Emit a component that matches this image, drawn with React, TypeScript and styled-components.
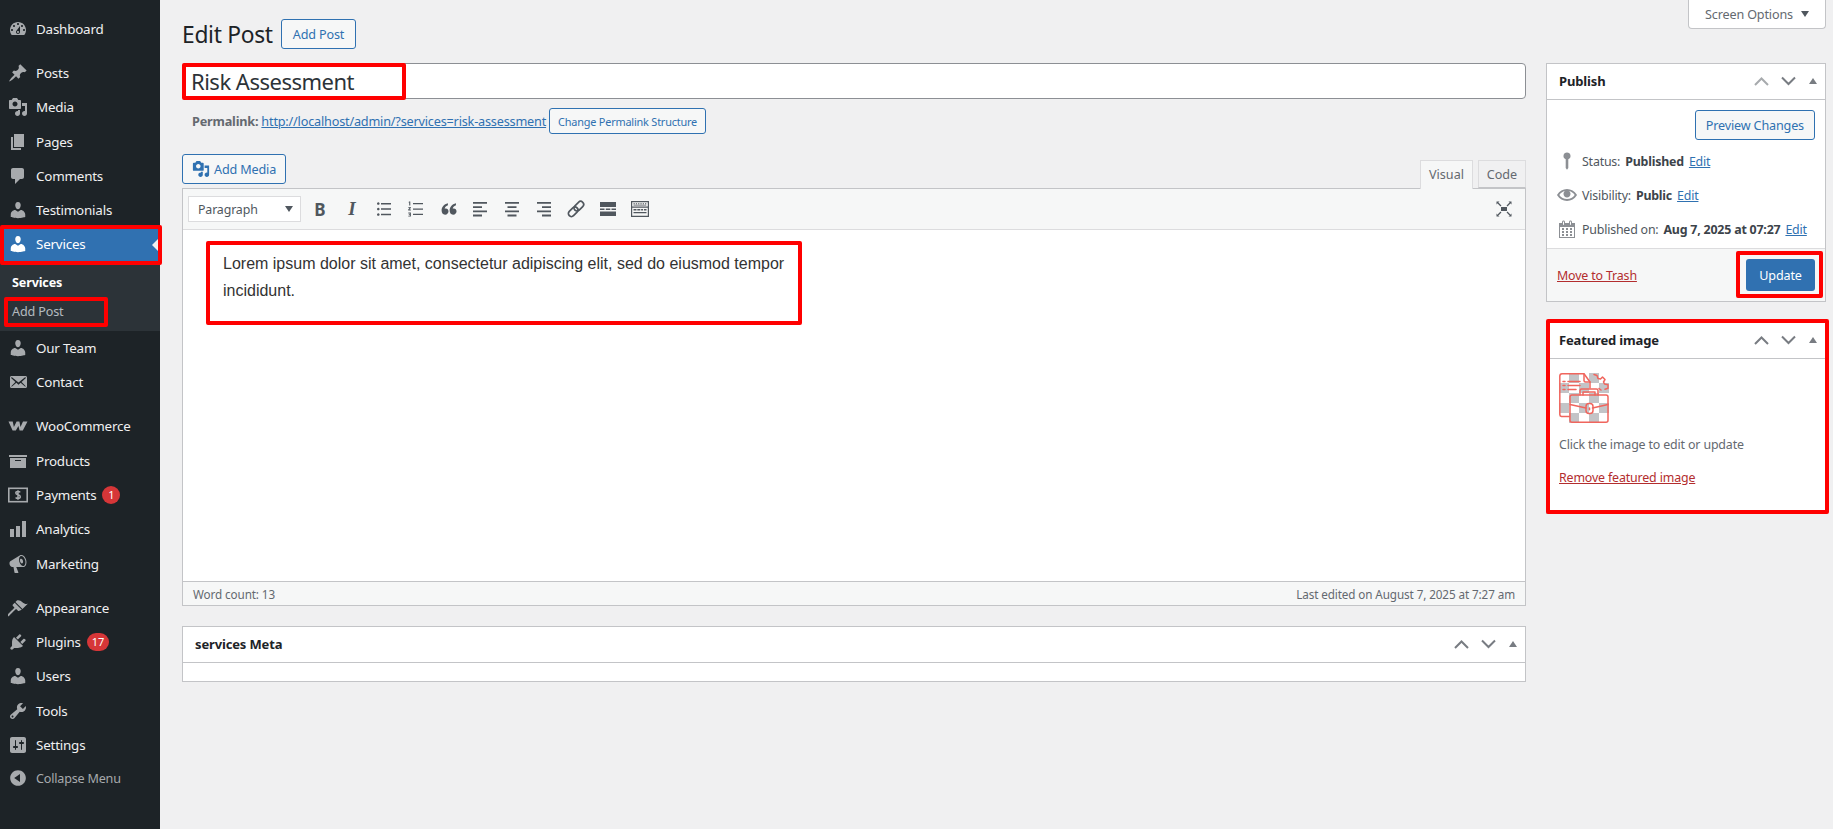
import React from 'react';
import styled, { createGlobalStyle } from 'styled-components';

const UI = `"Noto Sans", "Open Sans", "DejaVu Sans", sans-serif`;

const Global = createGlobalStyle`
  html, body { margin: 0; padding: 0; background: #f0f0f1; }
  body { font-family: ${UI}; font-size: 13px; color: #3c434a; }
  * { box-sizing: border-box; }
`;

const Page = styled.div`
  position: relative;
  display: flex;
  width: 1833px;
  height: 829px;
  overflow: hidden;
`;
const Sidebar = styled.nav`
  width: 160px;
  flex: none;
  background: #1d2327;
  padding-top: 12px;
`;
const MenuItem = styled.div<{ $current?: boolean }>`
  position: relative;
  height: 34.3px;
  display: flex;
  align-items: center;
  gap: 8px;
  padding: 0 0 1px 8px;
  font-size: 13.4px;
  letter-spacing: -0.2px;
  color: ${p => (p.$current ? '#fff' : '#f0f0f1')};
  background: ${p => (p.$current ? '#3071b1' : 'transparent')};
  svg { fill: ${p => (p.$current ? '#fff' : '#a7aaad')}; }
`;
const Notch = styled.span`
  position: absolute;
  right: 0;
  top: 50%;
  margin-top: -8px;
  border: 8px solid transparent;
  border-right-color: #f0f0f1;
  border-left-width: 0;
`;
const Separator = styled.div`
  height: 10px;
`;
const Submenu = styled.div`
  background: #2c3338;
  height: 69px;
  padding-top: 6px;
`;
const SubItem = styled.div<{ $strong?: boolean }>`
  height: 29px;
  line-height: 29px;
  padding-left: 12px;
  font-size: 12.6px;
  letter-spacing: -0.15px;
  font-weight: ${p => (p.$strong ? 700 : 400)};
  color: ${p => (p.$strong ? '#fff' : 'rgba(240,246,252,.7)')};
`;
const Badge = styled.span`
  min-width: 18px;
  height: 18px;
  padding: 0 5px;
  margin-left: -2px;
  border-radius: 9px;
  background: #d63638;
  color: #fff;
  font-size: 11px;
  letter-spacing: 0;
  line-height: 18px;
  text-align: center;
`;
const CollapseRow = styled(MenuItem)`
  font-size: 12.6px;
  color: #a7aaad;
  height: 32px;
`;
const Main = styled.main`
  flex: 1;
  padding: 0 7px 0 22px;
`;
const TopRow = styled.header`
  height: 63px;
  display: flex;
  justify-content: space-between;
  align-items: flex-start;
`;
const HeadGroup = styled.div`
  display: flex;
  align-items: center;
  gap: 8px;
  padding-top: 19px;
`;
const Heading = styled.h1`
  margin: 0;
  font-size: 22.8px;
  font-weight: 400;
  line-height: 29px;
  letter-spacing: -0.3px;
  color: #1d2327;
`;
const Button = styled.span<{ $h?: number; $small?: boolean; $pad?: number }>`
  display: inline-flex;
  align-items: center;
  justify-content: center;
  gap: 4px;
  height: ${p => p.$h ?? 30}px;
  padding: 0 ${p => p.$pad ?? 10}px;
  border: 1px solid #2f71b1;
  border-radius: 3px;
  background: #f6f7f7;
  color: #2f71b1;
  font-size: ${p => (p.$small ? 10.9 : 12.6)}px;
  letter-spacing: ${p => (p.$small ? -0.2 : -0.15)}px;
  white-space: nowrap;
  svg { fill: #2f71b1; }
`;
const ScreenOptions = styled.div`
  width: 138px;
  height: 29px;
  display: flex;
  align-items: center;
  justify-content: center;
  gap: 8px;
  background: #fff;
  border: 1px solid #c3c4c7;
  border-top: none;
  border-radius: 0 0 4px 4px;
  font-size: 12.6px;
  letter-spacing: -0.15px;
  color: #646970;
`;
const DownCaret = styled.span`
  border: 4.5px solid transparent;
  border-top: 6px solid #50575e;
  border-bottom: 0;
`;
const Columns = styled.div`
  display: grid;
  grid-template-columns: 1344px 280px;
  gap: 20px;
  align-items: start;
`;
const TitleBox = styled.div`
  height: 36px;
  background: #fff;
  border: 1px solid #8c8f94;
  border-radius: 4px;
  padding-left: 8px;
  font-size: 22px;
  line-height: 35px;
  letter-spacing: -0.5px;
  color: #2c3338;
`;
const PermalinkRow = styled.div`
  height: 26px;
  margin-top: 9px;
  padding-left: 10px;
  display: flex;
  align-items: center;
  gap: 3px;
  font-size: 12.7px;
  letter-spacing: -0.2px;
  color: #646970;
  b { font-weight: 700; }
`;
const Link = styled.a`
  color: #2f71b1;
  text-decoration: underline;
`;
const DangerLink = styled.a`
  color: #b32d2e;
  text-decoration: underline;
`;
const EditorBar = styled.div`
  height: 34px;
  margin-top: 20px;
  display: flex;
  justify-content: space-between;
  align-items: flex-start;
`;
const Tabs = styled.div`
  display: flex;
  gap: 5px;
  padding-top: 6px;
  height: 34px;
`;
const Tab = styled.div<{ $active?: boolean; $w: number }>`
  width: ${p => p.$w}px;
  height: ${p => (p.$active ? 29 : 28)}px;
  border: 1px solid #dcdcde;
  border-bottom: ${p => (p.$active ? 'none' : '1px solid #c3c4c7')};
  background: ${p => (p.$active ? '#f6f7f7' : '#f0f0f1')};
  position: relative;
  z-index: 1;
  font-size: 12.6px;
  line-height: 27px;
  text-align: center;
  color: #646970;
`;
const Editor = styled.section`
  border: 1px solid #c3c4c7;
  background: #fff;
`;
const Toolbar = styled.div`
  height: 41px;
  background: #f6f7f7;
  border-bottom: 1px solid #dcdcde;
  display: flex;
  align-items: center;
  padding: 0 5px;
`;
const FormatSelect = styled.div`
  width: 113px;
  height: 26px;
  margin-right: 3px;
  background: #fff;
  border: 1px solid #dcdcde;
  display: flex;
  align-items: center;
  justify-content: space-between;
  padding: 0 7px 0 9px;
  font-size: 12.4px;
  letter-spacing: -0.15px;
  color: #50575e;
`;
const ToolButton = styled.span<{ $italic?: boolean }>`
  width: 32px;
  height: 26px;
  display: flex;
  align-items: center;
  justify-content: center;
  color: #50575e;
  font-family: ${p => (p.$italic ? '"Liberation Serif", serif' : UI)};
  font-size: ${p => (p.$italic ? 19 : 17)}px;
  font-weight: 700;
  font-style: ${p => (p.$italic ? 'italic' : 'normal')};
  svg { fill: #50575e; }
`;
const Spacer = styled.div`
  flex: 1;
`;
const Content = styled.div`
  height: 351px;
  padding: 20px 0 0 40px;
  font-family: "Liberation Sans", Arial, sans-serif;
  font-size: 16px;
  line-height: 27px;
  color: #333;
  width: 620px;
`;
const StatusBar = styled.div`
  height: 24px;
  border-top: 1px solid #c3c4c7;
  background: #f6f7f7;
  display: flex;
  align-items: center;
  justify-content: space-between;
  padding: 0 10px;
  font-size: 11.7px;
  letter-spacing: -0.1px;
  color: #646970;
`;
const Box = styled.section<{ $mt?: number }>`
  background: #fff;
  border: 1px solid #c3c4c7;
  margin-top: ${p => p.$mt ?? 0}px;
`;
const BoxHead = styled.div`
  height: 36px;
  display: flex;
  align-items: center;
  justify-content: space-between;
  padding: 0 6px 2px 12px;
  border-bottom: 1px solid #c3c4c7;
  font-size: 13px;
  font-weight: 700;
  letter-spacing: -0.15px;
  color: #1d2327;
`;
const Handles = styled.div`
  display: flex;
  align-items: center;
  gap: 8px;
`;
const Triangle = styled.span`
  margin-left: 3px;
  margin-right: 2px;
  border: 4.5px solid transparent;
  border-bottom: 6px solid #787c82;
  border-top: 0;
`;
const Chevron = styled.svg<{ $dim?: boolean }>`
  width: 19px;
  height: 12px;
  fill: none;
  stroke: ${p => (p.$dim ? '#a7aaad' : '#787c82')};
  stroke-width: 2;
`;
const PublishBody = styled.div`
  padding: 10px 10px 0;
  height: 148px;
`;
const PreviewRow = styled.div`
  display: flex;
  justify-content: flex-end;
  margin-bottom: 4px;
`;
const StatusLine = styled.div`
  height: 34px;
  display: flex;
  align-items: center;
  gap: 5px;
  font-size: 12.4px;
  letter-spacing: -0.2px;
  color: #50575e;
  white-space: nowrap;
  b { color: #3c434a; font-weight: 700; }
  svg { fill: #8c8f94; flex: none; }
`;
const Actions = styled.div`
  height: 53px;
  background: #f6f7f7;
  border-top: 1px solid #dcdcde;
  display: flex;
  align-items: center;
  justify-content: space-between;
  padding: 0 10px;
  font-size: 12.4px;
  letter-spacing: -0.15px;
`;
const Primary = styled.span`
  width: 69px;
  height: 32px;
  display: flex;
  align-items: center;
  justify-content: center;
  background: #3071b1;
  border-radius: 3px;
  color: #fff;
  font-size: 12.6px;
  letter-spacing: -0.15px;
`;
const FeaturedBody = styled.div`
  padding: 14px 12px 0;
  height: 154px;
  font-size: 12.4px;
  letter-spacing: -0.15px;
  color: #646970;
`;
const FeaturedPic = styled.svg`
  display: block;
  width: 50px;
  height: 50px;
`;
const Hint = styled.p`
  margin: 13px 0 0;
  line-height: 17px;
`;
const RemoveRow = styled.p`
  margin: 16px 0 0;
  line-height: 17px;
`;
const MetaBody = styled.div`
  height: 18px;
`;
const Mark = styled.div<{ $x: number; $y: number; $w: number; $h: number }>`
  position: absolute;
  left: ${p => p.$x}px;
  top: ${p => p.$y}px;
  width: ${p => p.$w}px;
  height: ${p => p.$h}px;
  border: 4px solid #ff0000;
  border-radius: 2px;
  pointer-events: none;
`;

const D = ({ d, s = 20, odd }: { d: string; s?: number; odd?: boolean }) => (
  <svg width={s} height={s} viewBox="0 0 20 20" style={{ flex: 'none' }}>
    <path d={d} fillRule={odd ? 'evenodd' : 'nonzero'} />
  </svg>
);

const I = {
  dashboard: 'M3.76 16h12.48c1.1-1.37 1.76-3.11 1.76-5 0-4.42-3.58-8-8-8s-8 3.58-8 8c0 1.89.66 3.63 1.76 5zM10 4c.55 0 1 .45 1 1s-.45 1-1 1-1-.45-1-1 .45-1 1-1zM6 6c.55 0 1 .45 1 1s-.45 1-1 1-1-.45-1-1 .45-1 1-1zm8 0c.55 0 1 .45 1 1s-.45 1-1 1-1-.45-1-1 .45-1 1-1zm-5.37 5.55L12 7v6c0 1.1-.9 2-2 2s-2-.9-2-2c0-.57.24-1.08.63-1.45zM4 10c.55 0 1 .45 1 1s-.45 1-1 1-1-.45-1-1 .45-1 1-1zm12 0c.55 0 1 .45 1 1s-.45 1-1 1-1-.45-1-1 .45-1 1-1zm-5 3c0-.55-.45-1-1-1s-1 .45-1 1 .45 1 1 1 1-.45 1-1z',
  post: 'M10.44 3.02l1.82-1.82 6.36 6.35-1.83 1.82c-1.05-.68-2.48-.57-3.41.36l-.75.75c-.92.93-1.04 2.35-.35 3.41l-1.83 1.82-2.41-2.41-2.8 2.79c-.42.42-3.38 2.71-3.8 2.29s1.86-3.39 2.28-3.81l2.79-2.79L4.1 9.36l1.83-1.82c1.05.69 2.48.57 3.4-.36l.75-.75c.93-.92 1.05-2.35.36-3.41z',
  media: 'M13 11V4c0-.55-.45-1-1-1h-1.67L9 1H5L3.67 3H2c-.55 0-1 .45-1 1v7c0 .55.45 1 1 1h10c.55 0 1-.45 1-1zM7 4.5c1.38 0 2.5 1.12 2.5 2.5S8.38 9.5 7 9.5 4.5 8.38 4.5 7 5.62 4.5 7 4.5zM14 6h5v10.5c0 1.38-1.12 2.5-2.5 2.5S14 17.88 14 16.5s1.12-2.5 2.5-2.5c.17 0 .34.02.5.05V9h-3V6zm-4 8.05V13h2v3.5c0 1.38-1.12 2.5-2.5 2.5S7 17.88 7 16.5 8.12 14 9.5 14c.17 0 .34.02.5.05z',
  page: 'M6 15V2h10v13H6zm-1 1h8v2H3V5h2v11z',
  comment: 'M5 2h9c1.1 0 2 .9 2 2v7c0 1.1-.9 2-2 2h-2l-5 5v-5H5c-1.1 0-2-.9-2-2V4c0-1.1.9-2 2-2z',
  user: 'M10 9.25c-2.27 0-2.73-3.44-2.73-3.44C7 4.02 7.82 2 9.97 2c2.16 0 2.98 2.02 2.71 3.81 0 0-.41 3.44-2.68 3.44zm0 2.57L12.72 10c2.39 0 4.52 2.33 4.52 4.53v2.49s-3.65 1.13-7.24 1.13c-3.65 0-7.24-1.13-7.24-1.13v-2.49c0-2.25 1.94-4.48 4.47-4.48z',
  mail: 'M19 14.5v-9c0-.83-.67-1.5-1.5-1.5H3.49c-.83 0-1.5.67-1.5 1.5v9c0 .83.67 1.5 1.5 1.5H17.5c.83 0 1.5-.67 1.5-1.5zm-1.31-9.11c.33.33.15.67-.03.84L13.6 9.95l3.9 4.06c.12.14.2.36.06.51-.13.16-.43.15-.56.05l-4.37-3.73-2.14 1.95-2.13-1.95-4.37 3.73c-.13.1-.43.11-.56-.05-.14-.15-.06-.37.06-.51l3.9-4.06-4.06-3.72c-.18-.17-.36-.51-.03-.84s.67-.17.95.07l6.24 5.04 6.25-5.04c.28-.24.62-.4.95-.07z',
  woo: 'M.5 5.5h4.2l1.2 5.5 2.7-5.5h2.8l1.1 5.5 2.5-5.5h4.5L14.8 14.5h-3.2l-1.2-4.5-2.6 4.5H4.6z',
  archive: 'M19 4v2H1V4h18zM2 7h16v10H2V7zm11 3V9H7v1h6z',
  bars: 'M18 18V2h-4v16h4zm-6 0V7H8v11h4zm-6 0v-8H2v8h4z',
  megaphone: 'M18.15 5.94c.46 1.62.38 3.22-.02 4.48-.42 1.28-1.26 2.18-2.3 2.48-.16.06-.26.06-.4.06-.06.02-.12.02-.18.02-.06.02-.14.02-.22.02h-6.8l2.22 5.5c.02.14-.06.26-.14.34-.08.1-.24.16-.34.16H6.95c-.1 0-.26-.06-.34-.16-.08-.08-.16-.2-.14-.34l-1-5.5H4.25l-.02-.02c-.5.06-1.08-.18-1.54-.62s-.88-1.08-1.06-1.88c-.24-.8-.2-1.56-.02-2.2.18-.62.58-1.08 1.06-1.3l.02-.02 9-5.4c.1-.06.18-.1.24-.16.06-.04.14-.08.24-.12.16-.08.28-.12.5-.18 1.04-.3 2.24.1 3.22 1 .98.88 1.8 2.24 2.26 3.86zm-2.58 5.98h-.02c.4-.1.74-.34 1.04-.7.58-.7.86-1.76.86-3.04 0-.64-.1-1.3-.28-1.98-.34-1.36-1.02-2.5-1.78-3.24s-1.68-1.1-2.46-.88c-.82.22-1.4.96-1.7 2-.32 1.04-.28 2.36.06 3.72.38 1.36 1 2.5 1.8 3.24.78.74 1.62 1.1 2.48.88zm-2.54-7.08c.22-.04.42-.02.62.04.38.16.76.48 1.02 1s.42 1.2.42 1.78c0 .3-.04.56-.12.8-.18.48-.44.84-.86.94-.34.1-.8-.06-1.14-.4-.34-.32-.64-.86-.84-1.46-.38-1.24-.22-2.36.38-2.7h.02z',
  brush: 'M14.48 11.06L7.41 3.99l1.5-1.5c.5-.56 2.3-.47 3.51.32 1.21.8 1.43 1.28 2.91 2.1 1.18.64 2.45 1.26 4.45.85zm-.71.71L6.7 4.7 4.93 6.47c-.39.39-.39 1.02 0 1.41l1.06 1.06c.39.39.39 1.03 0 1.42-.6.6-6.4 6.2-6.4 6.2-.4.4-.4 1.03 0 1.42.39.39 1.02.39 1.41 0 0 0 5.8-5.8 6.4-6.4.39-.39 1.03-.39 1.42 0l1.06 1.06c.39.39 1.02.39 1.41 0z',
  plug: 'M13.11 4.36L9.87 7.6 8 5.73l3.24-3.24c.35-.34 1.05-.2 1.56.32.52.51.66 1.21.31 1.55zm-8 1.77l.91-1.12 9.01 9.01-1.19.84c-.71.71-2.63 1.16-3.82 1.16H6.14L4.9 17.26c-.59.59-1.54.59-2.12 0-.59-.58-.59-1.53 0-2.12l1.24-1.24v-3.88c0-1.13.4-3.19 1.09-3.89zm7.26 3.97l3.24-3.24c.34-.35 1.04-.21 1.55.31.52.51.66 1.21.31 1.55l-3.24 3.25z',
  wrench: 'M16.68 9.77c-1.34 1.34-3.3 1.67-4.95.99l-5.41 6.52c-.99.99-2.59.99-3.58 0s-.99-2.59 0-3.57l6.52-5.42c-.68-1.65-.35-3.61.99-4.95 1.28-1.28 3.12-1.62 4.72-1.06l-2.89 2.89 2.82 2.82 2.86-2.87c.53 1.58.18 3.39-1.08 4.65zM3.81 16.21c.4.39 1.04.39 1.43 0 .4-.4.4-1.04 0-1.43-.39-.4-1.03-.4-1.43 0-.39.39-.39 1.03 0 1.43z',
  settings: 'M18 16V4c0-1.1-.9-2-2-2H4c-1.1 0-2 .9-2 2v12c0 1.1.9 2 2 2h12c1.1 0 2-.9 2-2zM8 11h1c.55 0 1 .45 1 1s-.45 1-1 1H8v1.5c0 .28-.22.5-.5.5s-.5-.22-.5-.5V13H6c-.55 0-1-.45-1-1s.45-1 1-1h1V5.5c0-.28.22-.5.5-.5s.5.22.5.5V11zm5-2h-1c-.55 0-1-.45-1-1s.45-1 1-1h1V5.5c0-.28.22-.5.5-.5s.5.22.5.5V7h1c.55 0 1 .45 1 1s-.45 1-1 1h-1v5.5c0 .28-.22.5-.5.5s-.5-.22-.5-.5V9z',
  collapse: 'M10 2.16c4.33 0 7.84 3.51 7.84 7.84s-3.51 7.84-7.84 7.84S2.16 14.33 2.16 10 5.71 2.16 10 2.16zm2 11.72V6.12L6.18 9.97z',
  pin: 'M10 1.5a3.5 3.5 0 0 1 1.3 6.75V17L10 18.8 8.7 17V8.25A3.5 3.5 0 0 1 10 1.5z',
  eye: 'M19.7 9.4C17.7 6 14 3.9 10 3.9S2.3 6 .3 9.4L0 10l.3.6c2 3.4 5.7 5.5 9.7 5.5s7.7-2.1 9.7-5.5l.3-.6-.3-.6zM10 14.1c-3.1 0-6-1.6-7.7-4.1C3.6 8 5.7 6.6 8 6.1c-.9.6-1.5 1.7-1.5 2.9 0 1.9 1.6 3.5 3.5 3.5s3.5-1.6 3.5-3.5c0-1.2-.6-2.3-1.5-2.9 2.3.5 4.4 1.9 5.7 3.9-1.7 2.5-4.6 4.1-7.7 4.1z',
  calendar: 'M15 4h3v15H2V4h3V3c0-.41.15-.76.44-1.06.29-.29.65-.44 1.06-.44s.77.15 1.06.44c.29.3.44.65.44 1.06v1h4V3c0-.41.15-.76.44-1.06.29-.29.65-.44 1.06-.44s.77.15 1.06.44c.29.3.44.65.44 1.06v1zM6 3v2.5c0 .14.05.26.15.36.09.09.21.14.35.14s.26-.05.35-.14c.1-.1.15-.22.15-.36V3c0-.14-.05-.26-.15-.35-.09-.1-.21-.15-.35-.15s-.26.05-.35.15c-.1.09-.15.21-.15.35zm7 0v2.5c0 .14.05.26.14.36.1.09.22.14.36.14s.26-.05.36-.14c.09-.1.14-.22.14-.36V3c0-.14-.05-.26-.14-.35-.1-.1-.22-.15-.36-.15s-.26.05-.36.15c-.09.09-.14.21-.14.35zm4 15V8H3v10h14zM7 9v2H5V9h2zm2 0h2v2H9V9zm4 2V9h2v2h-2zm-6 1v2H5v-2h2zm2 0h2v2H9v-2zm4 2v-2h2v2h-2zm-6 1v2H5v-2h2zm4 2H9v-2h2v2zm4 0h-2v-2h2v2z',
  ul: 'M3 4.5a1.3 1.3 0 1 1 0 .01zM7 4h10v1.5H7zM3 10a1.3 1.3 0 1 1 0 .01zM7 9.3h10v1.5H7zM3 15.5a1.3 1.3 0 1 1 0 .01zM7 14.7h10v1.5H7z',
  ol: 'M7 4h10v1.3H7zM7 9.4h10v1.3H7zM7 14.8h10v1.3H7zM3 2.5h1.3v4H3.2V3.6H2.5zM2.3 8h2.5v1L3.5 10.6h1.4v.9H2.2v-.9l1.5-1.8H2.3zM2.3 13.5h2.6v4H2.3v-.8h1.5v-.8H2.8v-.7h1v-.8H2.3z',
  quote: 'M9.5 4.5v1.8C7.6 7 6.8 8 6.7 9.3c.3-.1.6-.2 1-.2C9 9.1 10 10.1 10 11.5S8.9 14.5 7 14.5c-2 0-3-1.6-3-3.8 0-2.9 2-5.3 5.500-6.200zm7 0v1.800c-1.900.7-2.700 1.700-2.800 3 .3-.1.6-.2 1-.2 1.300 0 2.300 1 2.300 2.400s-1.100 3-3 3c-2 0-3-1.600-3-3.800 0-2.900 2-5.300 5.500-6.200z',
  left: 'M3 3h14v1.8H3zM3 7.2h9V9H3zM3 11.4h14v1.8H3zM3 15.6h9v1.8H3z',
  center: 'M3 3h14v1.8H3zM5.5 7.2h9V9h-9zM3 11.4h14v1.8H3zM5.5 15.6h9v1.8h-9z',
  right: 'M3 3h14v1.8H3zM8 7.2h9V9H8zM3 11.4h14v1.8H3zM8 15.6h9v1.8H8z',
  more: 'M2 3h16v5H2zM2 9.5h4.5V11H2zM7.8 9.5h4.5V11H7.8zM13.5 9.5H18V11h-4.5zM2 12.5h16V17H2z',
  keyboard: 'M1 2h18v16H1zM2.2 3.2v4.4h15.600V3.200zM2.200 8.800v8h15.600v-8zM3.500 4.200h1.300v1H3.500zM5.800 4.200h1.300v1H5.800zM8.100 4.200h1.300v1H8.100zM10.400 4.200h1.300v1h-1.300zM12.700 4.200H14v1h-1.300zM15 4.200h1.300v1H15zM3.500 5.800h12.800v.8H3.500zM3.500 10h3v1.500h-3zM7.300 10h3v1.500h-3zM11.100 10h2v1.500h-2zM14 10h2.500v1.500H14zM3.500 13h13v1.300h-13z',
};

const LinkIcon = () => (
  <svg width="20" height="20" viewBox="0 0 20 20" style={{ flex: 'none', fill: 'none' }}>
    <g transform="rotate(-45 10 10)" fill="none" stroke="#50575e" strokeWidth="1.7">
      <rect x="0.5" y="7" width="11" height="6" rx="3" />
      <rect x="8.5" y="7" width="11" height="6" rx="3" />
    </g>
  </svg>
);

const ExpandIcon = () => (
  <svg width="18" height="18" viewBox="0 0 18 18" style={{ flex: 'none' }}>
    <path d="M6 7h6v4H6z" fill="#50575e" />
    <path d="M3 3l3 3M15 3l-3 3M3 15l3-3M15 15l-3-3" stroke="#50575e" strokeWidth="1.3" />
    <path d="M1.5 1.5h3l-3 3zM16.5 1.5h-3l3 3zM1.5 16.5h3l-3-3zM16.5 16.5h-3l3-3z" fill="#50575e" />
  </svg>
);

const ChevronUp = ({ dim }: { dim?: boolean }) => (
  <Chevron $dim={dim} viewBox="0 0 19 12"><path d="M3 10l6.5-6.5L16 10" /></Chevron>
);
const ChevronDown = () => (
  <Chevron viewBox="0 0 19 12"><path d="M3 2.5L9.5 9 16 2.5" /></Chevron>
);
const BoxHandles = ({ dim }: { dim?: boolean }) => (
  <Handles>
    <ChevronUp dim={dim} />
    <ChevronDown />
    <Triangle />
  </Handles>
);

const PaymentsIcon = () => (
  <svg width="20" height="20" viewBox="0 0 20 20" style={{ flex: 'none' }}>
    <rect x=".8" y="3.3" width="18.4" height="13.4" fill="none" stroke="#a7aaad" strokeWidth="1.6" />
    <path d="M12.2 7.3c-.4-.6-1.2-.9-2.2-.9-1.3 0-2.2.6-2.2 1.6 0 2.3 4.5 1.2 4.500 3.700 0 1-.9 1.700-2.300 1.700-1 0-1.900-.4-2.400-1M10 5.200v9.600" fill="none" stroke="#a7aaad" strokeWidth="1.5" />
  </svg>
);

const FeaturedImage = () => (
  <FeaturedPic viewBox="0 0 50 50">
    <defs>
      <pattern id="chk" width="20" height="20" patternUnits="userSpaceOnUse">
        <rect x="10" y="0" width="10" height="10" fill="#c3c4c7" />
        <rect x="0" y="10" width="10" height="10" fill="#c3c4c7" />
      </pattern>
    </defs>
    <rect width="50" height="50" fill="url(#chk)" />
    <g fill="none" stroke="#f0655d" strokeWidth="1.5" strokeLinejoin="round" strokeLinecap="round">
      <path d="M10.5 43.5H2.5A2 2 0 0 1 .8 41.500V3A2.300 2.300 0 0 1 3 .8H25L31 9V15" />
      <path d="M25 1V7.500A1.500 1.500 0 0 0 26.500 9H31" />
      <path d="M9 8.500H21M9 12.500H21M9 16.500H17" />
      <path d="M4 8.500H6M4 12.500H6M4 16.500H6" />
      <path d="M35 1.500l3 1 1 3 2.500.5 2-2 2.500 2.500-1.500 2.500 1 2 3.500 .7v3.500l-3 1M40 15.500l2 1.500" />
      <rect x="11" y="22" width="38" height="27.2" rx="2" />
      <path d="M21 22V17.500A1.500 1.500 0 0 1 22.500 16H37.500A1.500 1.500 0 0 1 39 17.500V22M24 22V19H36V22" />
      <path d="M11 31.500L27 35M49 31.500L33.500 35" />
      <rect x="27" y="30.5" width="7" height="10" rx="3" />
      <path d="M30.5 35v1.800" />
    </g>
  </FeaturedPic>
);

const menuTop: [keyof typeof I, string][] = [
  ['post', 'Posts'], ['media', 'Media'], ['page', 'Pages'], ['comment', 'Comments'], ['user', 'Testimonials'],
];

const App = () => (
  <Page>
    <Global />
    <Sidebar>
      <MenuItem><D d={I.dashboard} />Dashboard</MenuItem>
      <Separator />
      {menuTop.map(([icon, label]) => (
        <MenuItem key={label}><D d={I[icon]} />{label}</MenuItem>
      ))}
      <MenuItem $current><D d={I.user} />Services<Notch /></MenuItem>
      <Submenu>
        <SubItem $strong>Services</SubItem>
        <SubItem>Add Post</SubItem>
      </Submenu>
      <MenuItem><D d={I.user} />Our Team</MenuItem>
      <MenuItem><D d={I.mail} />Contact</MenuItem>
      <Separator />
      <MenuItem><D d={I.woo} />WooCommerce</MenuItem>
      <MenuItem><D d={I.archive} />Products</MenuItem>
      <MenuItem><PaymentsIcon />Payments<Badge>1</Badge></MenuItem>
      <MenuItem><D d={I.bars} />Analytics</MenuItem>
      <MenuItem><D d={I.megaphone} />Marketing</MenuItem>
      <Separator />
      <MenuItem><D d={I.brush} />Appearance</MenuItem>
      <MenuItem><D d={I.plug} />Plugins<Badge>17</Badge></MenuItem>
      <MenuItem><D d={I.user} />Users</MenuItem>
      <MenuItem><D d={I.wrench} />Tools</MenuItem>
      <MenuItem><D d={I.settings} />Settings</MenuItem>
      <CollapseRow><D d={I.collapse} />Collapse Menu</CollapseRow>
    </Sidebar>
    <Main>
      <TopRow>
        <HeadGroup>
          <Heading>Edit Post</Heading>
          <Button $pad={11}>Add Post</Button>
        </HeadGroup>
        <ScreenOptions>Screen Options<DownCaret /></ScreenOptions>
      </TopRow>
      <Columns>
        <div>
          <TitleBox>Risk Assessment</TitleBox>
          <PermalinkRow>
            <b>Permalink:</b> <Link>http://localhost/admin/?services=risk-assessment</Link>
            <Button $h={26} $small $pad={8}>Change Permalink Structure</Button>
          </PermalinkRow>
          <EditorBar>
            <Button $pad={9}><D d={I.media} s={18} />Add Media</Button>
            <Tabs>
              <Tab $active $w={53}>Visual</Tab>
              <Tab $w={48}>Code</Tab>
            </Tabs>
          </EditorBar>
          <Editor>
            <Toolbar>
              <FormatSelect>Paragraph<DownCaret /></FormatSelect>
              <ToolButton>B</ToolButton>
              <ToolButton $italic>I</ToolButton>
              <ToolButton><D d={I.ul} /></ToolButton>
              <ToolButton><D d={I.ol} /></ToolButton>
              <ToolButton><D d={I.quote} s={23} /></ToolButton>
              <ToolButton><D d={I.left} /></ToolButton>
              <ToolButton><D d={I.center} /></ToolButton>
              <ToolButton><D d={I.right} /></ToolButton>
              <ToolButton><LinkIcon /></ToolButton>
              <ToolButton><D d={I.more} /></ToolButton>
              <ToolButton><D d={I.keyboard} odd /></ToolButton>
              <Spacer />
              <ToolButton><ExpandIcon /></ToolButton>
            </Toolbar>
            <Content>Lorem ipsum dolor sit amet, consectetur adipiscing elit, sed do eiusmod tempor incididunt.</Content>
            <StatusBar>
              <span>Word count: 13</span>
              <span>Last edited on August 7, 2025 at 7:27 am</span>
            </StatusBar>
          </Editor>
          <Box $mt={20}>
            <BoxHead>services Meta<BoxHandles /></BoxHead>
            <MetaBody />
          </Box>
        </div>
        <div>
          <Box>
            <BoxHead>Publish<BoxHandles dim /></BoxHead>
            <PublishBody>
              <PreviewRow><Button>Preview Changes</Button></PreviewRow>
              <StatusLine><D d={I.pin} />Status: <b>Published</b> <Link>Edit</Link></StatusLine>
              <StatusLine><D d={I.eye} />Visibility: <b>Public</b> <Link>Edit</Link></StatusLine>
              <StatusLine><D d={I.calendar} />Published on: <b>Aug 7, 2025 at 07:27</b> <Link>Edit</Link></StatusLine>
            </PublishBody>
            <Actions>
              <DangerLink>Move to Trash</DangerLink>
              <Primary>Update</Primary>
            </Actions>
          </Box>
          <Box $mt={20}>
            <BoxHead>Featured image<BoxHandles /></BoxHead>
            <FeaturedBody>
              <FeaturedImage />
              <Hint>Click the image to edit or update</Hint>
              <RemoveRow><DangerLink>Remove featured image</DangerLink></RemoveRow>
            </FeaturedBody>
          </Box>
        </div>
      </Columns>
    </Main>
    <Mark $x={0} $y={225} $w={162} $h={40} />
    <Mark $x={4} $y={297} $w={104} $h={30} />
    <Mark $x={182} $y={63} $w={224} $h={37} />
    <Mark $x={206} $y={241} $w={596} $h={84} />
    <Mark $x={1736} $y={251} $w={87} $h={47} />
    <Mark $x={1546} $y={319} $w={283} $h={195} />
  </Page>
);

export default App;
